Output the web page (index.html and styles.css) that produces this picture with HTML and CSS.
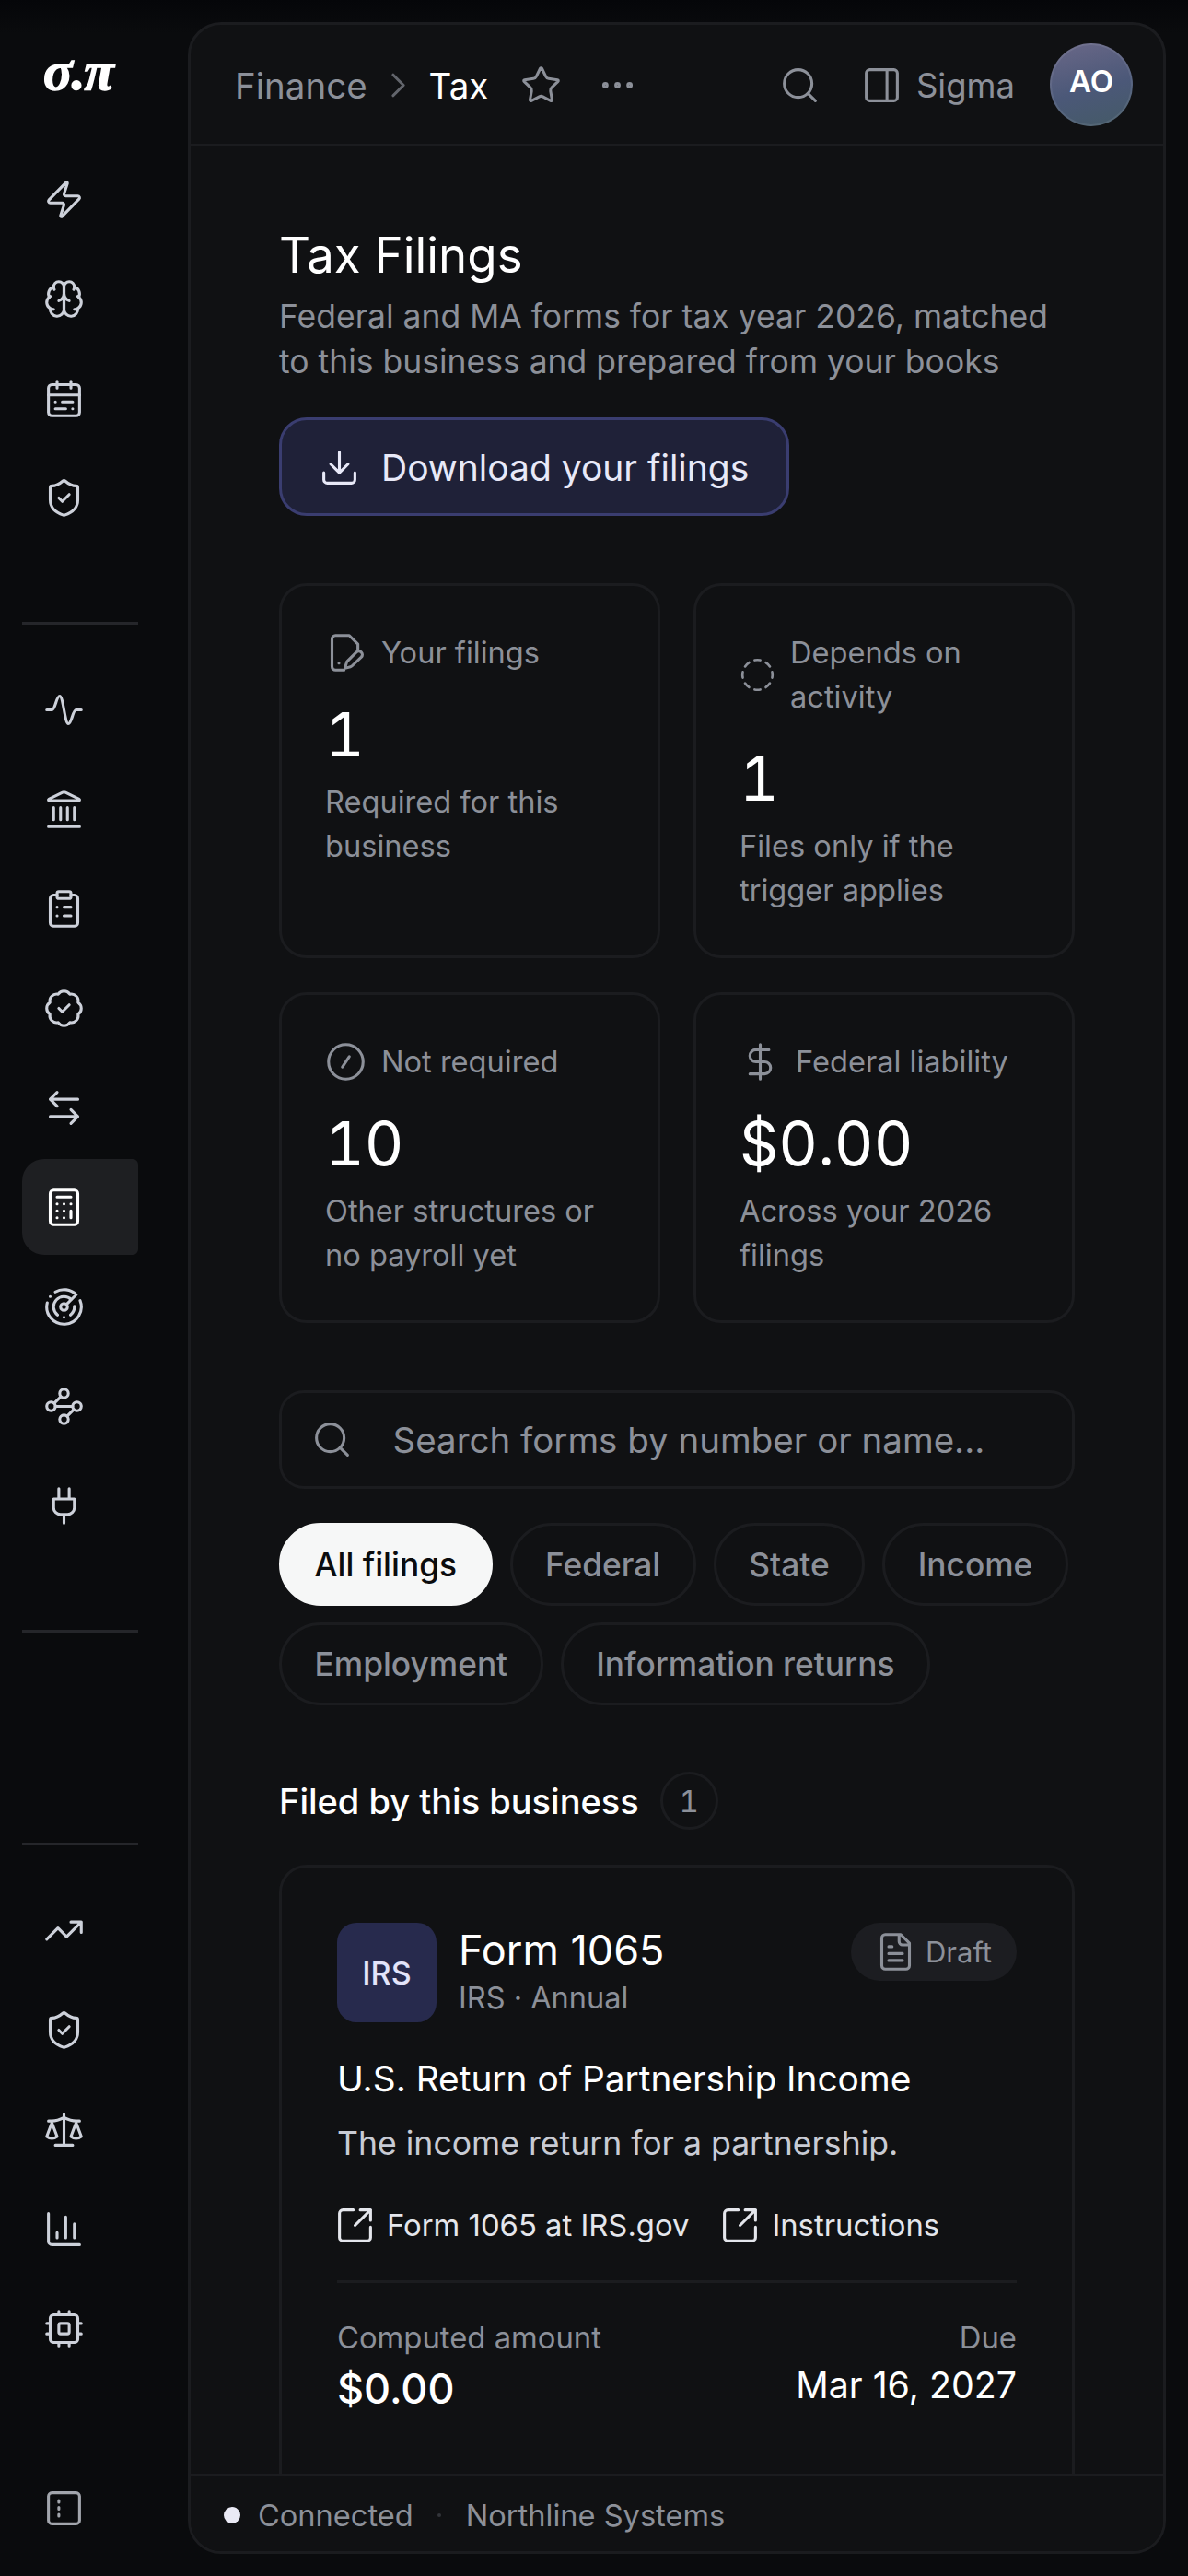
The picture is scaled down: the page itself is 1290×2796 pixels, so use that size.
FILE: index.html
```html
<!DOCTYPE html>
<html lang="en">
<head>
    <meta charset="UTF-8">
    <meta name="viewport" content="width=device-width, initial-scale=1.0">
    <title>Tax Filings</title>
    <link rel="stylesheet" href="styles.css">
</head>
<body>
    <aside class="sidebar">
        <div class="logo">σ.π</div>
        <nav class="nav-group">
            <a class="nav-item"><svg class="icon" viewBox="0 0 24 24"><path d="M4 14a1 1 0 0 1-.78-1.63l9.9-10.2a.5.5 0 0 1 .86.46l-1.92 6.02A1 1 0 0 0 13 10h7a1 1 0 0 1 .78 1.63l-9.9 10.2a.5.5 0 0 1-.86-.46l1.92-6.02A1 1 0 0 0 11 14z"/></svg></a>
            <a class="nav-item"><svg class="icon" viewBox="0 0 24 24"><path d="M12 5a3 3 0 1 0-5.997.125 4 4 0 0 0-2.526 5.77 4 4 0 0 0 .556 6.588A4 4 0 1 0 12 18Z"/><path d="M12 5a3 3 0 1 1 5.997.125 4 4 0 0 1 2.526 5.77 4 4 0 0 1-.556 6.588A4 4 0 1 1 12 18Z"/><path d="M12 5v13M15 13a4.5 4.5 0 0 1-3-4 4.5 4.5 0 0 1-3 4M17.599 6.5a3 3 0 0 0 .399-1.375M6.003 5.125A3 3 0 0 0 6.401 6.5M3.477 10.896a4 4 0 0 1 .585-.396M19.938 10.5a4 4 0 0 1 .585.396M6 18a4 4 0 0 1-1.967-.516M19.967 17.484A4 4 0 0 1 18 18"/></svg></a>
            <a class="nav-item"><svg class="icon" viewBox="0 0 24 24"><rect x="3" y="4" width="18" height="18" rx="2"/><path d="M16 2v4M3 10h18M8 2v4M17 14h-6M13 18H7M7 14h.01M17 18h.01"/></svg></a>
            <a class="nav-item"><svg class="icon" viewBox="0 0 24 24"><path d="M20 13c0 5-3.5 7.5-7.66 8.95a1 1 0 0 1-.67-.01C7.5 20.5 4 18 4 13V6a1 1 0 0 1 1-1c2 0 4.5-1.2 6.24-2.72a1.17 1.17 0 0 1 1.52 0C14.51 3.81 17 5 19 5a1 1 0 0 1 1 1z"/><path d="m9 12 2 2 4-4"/></svg></a>
        </nav>
        <div class="nav-divider"></div>
        <nav class="nav-group">
            <a class="nav-item"><svg class="icon" viewBox="0 0 24 24"><path d="M2 12h3c2 0 2.5-8 4.5-8s3 16 5 16 2.5-8 4.5-8H22"/></svg></a>
            <a class="nav-item"><svg class="icon" viewBox="0 0 24 24"><path d="M10 18v-7M14 18v-7M18 18v-7M6 18v-7M3 22h18"/><path d="M11.12 2.198a2 2 0 0 1 1.76.006l7.866 3.847c.476.233.31.949-.22.949H3.474c-.53 0-.695-.716-.22-.949z"/></svg></a>
            <a class="nav-item"><svg class="icon" viewBox="0 0 24 24"><rect x="8" y="2" width="8" height="4" rx="1"/><path d="M16 4h2a2 2 0 0 1 2 2v14a2 2 0 0 1-2 2H6a2 2 0 0 1-2-2V6a2 2 0 0 1 2-2h2M12 11h4M12 16h4M8 11h.01M8 16h.01"/></svg></a>
            <a class="nav-item"><svg class="icon" viewBox="0 0 24 24"><path d="M3.85 8.62a4 4 0 0 1 4.78-4.77 4 4 0 0 1 6.74 0 4 4 0 0 1 4.78 4.78 4 4 0 0 1 0 6.74 4 4 0 0 1-4.77 4.78 4 4 0 0 1-6.75 0 4 4 0 0 1-4.78-4.77 4 4 0 0 1 0-6.76Z"/><path d="m9 12 2 2 4-4"/></svg></a>
            <a class="nav-item"><svg class="icon" viewBox="0 0 24 24"><path d="M8 3 4 7l4 4M4 7h16M16 21l4-4-4-4M20 17H4"/></svg></a>
            <a class="nav-item active"><svg class="icon" viewBox="0 0 24 24"><rect x="4" y="2" width="16" height="20" rx="2"/><path d="M8 6h8M16 14v4M16 10h.01M12 10h.01M8 10h.01M12 14h.01M8 14h.01M12 18h.01M8 18h.01"/></svg></a>
            <a class="nav-item"><svg class="icon" viewBox="0 0 24 24"><path d="M19.07 4.93A10 10 0 0 0 6.99 3.34M4 6h.01M2.29 9.62A10 10 0 1 0 21.31 8.35M16.24 7.76A6 6 0 1 0 8.23 16.67M12 18h.01M17.99 11.66A6 6 0 0 1 15.77 16.67M13.41 10.59l5.66-5.66"/><circle cx="12" cy="12" r="2"/></svg></a>
            <a class="nav-item"><svg class="icon" viewBox="0 0 24 24"><circle cx="12" cy="4.5" r="2.5"/><circle cx="4.5" cy="12" r="2.5"/><circle cx="19.5" cy="12" r="2.5"/><circle cx="12" cy="19.5" r="2.5"/><path d="m10.2 6.3-3.9 3.9M7 12h10M13.8 17.7l3.9-3.9"/></svg></a>
            <a class="nav-item"><svg class="icon" viewBox="0 0 24 24"><path d="M12 22v-5M9 8V2M15 8V2M18 8v5a4 4 0 0 1-4 4h-4a4 4 0 0 1-4-4V8Z"/></svg></a>
        </nav>
        <div class="nav-divider"></div>
        <div class="nav-divider nav-divider-far"></div>
        <nav class="nav-group">
            <a class="nav-item"><svg class="icon" viewBox="0 0 24 24"><path d="M22 7l-8.5 8.5-5-5L2 17M16 7h6v6"/></svg></a>
            <a class="nav-item"><svg class="icon" viewBox="0 0 24 24"><path d="M20 13c0 5-3.5 7.5-7.66 8.95a1 1 0 0 1-.67-.01C7.5 20.5 4 18 4 13V6a1 1 0 0 1 1-1c2 0 4.5-1.2 6.24-2.72a1.17 1.17 0 0 1 1.52 0C14.51 3.81 17 5 19 5a1 1 0 0 1 1 1z"/><path d="m9 12 2 2 4-4"/></svg></a>
            <a class="nav-item"><svg class="icon" viewBox="0 0 24 24"><path d="m16 16 3-8 3 8c-.87.65-1.92 1-3 1s-2.13-.35-3-1ZM2 16l3-8 3 8c-.87.65-1.92 1-3 1s-2.13-.35-3-1ZM7 21h10M12 3v18M3 7h2c2 0 5-1 7-2 2 1 5 2 7 2h2"/></svg></a>
            <a class="nav-item"><svg class="icon" viewBox="0 0 24 24"><path d="M3 3v16a2 2 0 0 0 2 2h16M18 17V9M13 17V5M8 17v-3"/></svg></a>
            <a class="nav-item"><svg class="icon" viewBox="0 0 24 24"><rect x="4" y="4" width="16" height="16" rx="2"/><rect x="9" y="9" width="6" height="6" rx="1"/><path d="M15 2v2M15 20v2M2 15h2M2 9h2M20 15h2M20 9h2M9 2v2M9 20v2"/></svg></a>
        </nav>
        <a class="nav-item nav-toggle"><svg class="icon" viewBox="0 0 24 24"><rect x="3" y="3" width="18" height="18" rx="2"/><path d="M9 7.5v1M9 11.5v1M9 15.5v1"/></svg></a>
    </aside>

    <main class="shell">
        <header class="topbar">
            <span class="crumb">Finance</span>
            <svg class="top-icon chevron" viewBox="0 0 24 24"><path d="m9 18 6-6-6-6"/></svg>
            <span class="crumb-current">Tax</span>
            <svg class="top-icon star" viewBox="0 0 24 24"><path d="M11.525 2.295a.53.53 0 0 1 .95 0l2.31 4.679a2.12 2.12 0 0 0 1.595 1.16l5.166.756a.53.53 0 0 1 .294.904l-3.736 3.638a2.12 2.12 0 0 0-.611 1.878l.882 5.14a.53.53 0 0 1-.771.56l-4.618-2.428a2.12 2.12 0 0 0-1.973 0L6.396 21.01a.53.53 0 0 1-.77-.56l.881-5.139a2.12 2.12 0 0 0-.611-1.879L2.16 9.795a.53.53 0 0 1 .294-.906l5.165-.755a2.12 2.12 0 0 0 1.597-1.16z"/></svg>
            <svg class="top-icon dots" viewBox="0 0 24 24"><circle cx="5" cy="12" r="1"/><circle cx="12" cy="12" r="1"/><circle cx="19" cy="12" r="1"/></svg>
            <svg class="top-icon search" viewBox="0 0 24 24"><circle cx="11" cy="11" r="8"/><path d="m21 21-4.3-4.3"/></svg>
            <svg class="top-icon panel" viewBox="0 0 24 24"><rect x="3" y="3" width="18" height="18" rx="2"/><path d="M15 3v18"/></svg>
            <span class="mode">Sigma</span>
            <div class="avatar">AO</div>
        </header>

        <div class="content">
            <h1>Tax Filings</h1>
            <p class="subtitle">Federal and MA forms for tax year 2026, matched to this business and prepared from your books</p>
            <button class="download-btn">
                <svg viewBox="0 0 24 24"><path d="M12 15V3M21 15v4a2 2 0 0 1-2 2H5a2 2 0 0 1-2-2v-4M7 10l5 5 5-5"/></svg>
                Download your filings
            </button>

            <section class="stats">
                <div class="stat-card">
                    <div class="stat-label">
                        <svg class="stat-icon" viewBox="0 0 24 24"><path d="M11 22H6a2 2 0 0 1-2-2V4a2 2 0 0 1 2-2h8l5 5v3"/><path d="M21 14.5a2 2 0 0 0-2.9-2.8l-5.2 5.2a2 2 0 0 0-.5.9l-.9 3.2 3.2-.9a2 2 0 0 0 .9-.5zM8 18h.01"/></svg>
                        <span>Your filings</span>
                    </div>
                    <div class="stat-value">1</div>
                    <div class="stat-note">Required for this business</div>
                </div>
                <div class="stat-card">
                    <div class="stat-label">
                        <svg class="stat-icon stat-icon-small" viewBox="0 0 24 24"><path d="M10.1 2.182a10 10 0 0 1 3.8 0M13.9 21.818a10 10 0 0 1-3.8 0M17.609 3.721a10 10 0 0 1 2.69 2.7M2.182 13.9a10 10 0 0 1 0-3.8M20.279 17.609a10 10 0 0 1-2.7 2.69M21.818 10.1a10 10 0 0 1 0 3.8M3.721 6.391a10 10 0 0 1 2.7-2.69M6.391 20.279a10 10 0 0 1-2.69-2.7"/></svg>
                        <span>Depends on activity</span>
                    </div>
                    <div class="stat-value">1</div>
                    <div class="stat-note">Files only if the trigger applies</div>
                </div>
                <div class="stat-card">
                    <div class="stat-label">
                        <svg class="stat-icon" viewBox="0 0 24 24"><circle cx="12" cy="12" r="10"/><path d="m14 9-4 6"/></svg>
                        <span>Not required</span>
                    </div>
                    <div class="stat-value">10</div>
                    <div class="stat-note">Other structures or no payroll yet</div>
                </div>
                <div class="stat-card">
                    <div class="stat-label">
                        <svg class="stat-icon" viewBox="0 0 24 24"><path d="M12 2v20M17 5H9.5a3.5 3.5 0 0 0 0 7h5a3.5 3.5 0 0 1 0 7H6"/></svg>
                        <span>Federal liability</span>
                    </div>
                    <div class="stat-value">$0.00</div>
                    <div class="stat-note">Across your 2026 filings</div>
                </div>
            </section>

            <div class="search-box">
                <svg viewBox="0 0 24 24"><circle cx="11" cy="11" r="8"/><path d="m21 21-4.3-4.3"/></svg>
                <span>Search forms by number or name...</span>
            </div>

            <div class="chips">
                <span class="chip chip-active">All filings</span>
                <span class="chip">Federal</span>
                <span class="chip">State</span>
                <span class="chip">Income</span>
                <span class="chip">Employment</span>
                <span class="chip">Information returns</span>
            </div>

            <div class="section-head">
                <h2>Filed by this business</h2>
                <span class="count">1</span>
            </div>

            <article class="form-card">
                <div class="form-top">
                    <div class="form-tile">IRS</div>
                    <div class="form-name">
                        <h3>Form 1065</h3>
                        <p>IRS · Annual</p>
                    </div>
                    <span class="status-pill">
                        <svg viewBox="0 0 24 24"><path d="M15 2H6a2 2 0 0 0-2 2v16a2 2 0 0 0 2 2h12a2 2 0 0 0 2-2V7ZM14 2v4a2 2 0 0 0 2 2h4M10 9H8M16 13H8M16 17H8"/></svg>
                        Draft
                    </span>
                </div>
                <h4>U.S. Return of Partnership Income</h4>
                <p class="form-desc">The income return for a partnership.</p>
                <div class="form-links">
                    <a><svg viewBox="0 0 24 24"><path d="M21 13v6a2 2 0 0 1-2 2H5a2 2 0 0 1-2-2V5a2 2 0 0 1 2-2h6M21 3l-9 9M15 3h6v6"/></svg>Form 1065 at IRS.gov</a>
                    <a><svg viewBox="0 0 24 24"><path d="M21 13v6a2 2 0 0 1-2 2H5a2 2 0 0 1-2-2V5a2 2 0 0 1 2-2h6M21 3l-9 9M15 3h6v6"/></svg>Instructions</a>
                </div>
                <div class="form-meta">
                    <div>
                        <div class="meta-label">Computed amount</div>
                        <div class="meta-amount">$0.00</div>
                    </div>
                    <div class="meta-right">
                        <div class="meta-label">Due</div>
                        <div class="meta-date">Mar 16, 2027</div>
                    </div>
                </div>
            </article>
        </div>

        <footer class="statusbar">
            <span class="status-dot"></span>
            <span>Connected</span>
            <span class="status-sep"></span>
            <span>Northline Systems</span>
        </footer>
    </main>
</body>
</html>
```

FILE: styles.css
```css
* {
    margin: 0;
    padding: 0;
    box-sizing: border-box;
}

html, body {
    width: 1290px;
    height: 2796px;
    overflow: hidden;
}

body {
    display: flex;
    align-items: flex-start;
    background: linear-gradient(180deg, #050609 0, #0a0b0d 36px);
    font-family: Inter, "Noto Sans", sans-serif;
    color: #fff;
}

svg {
    width: 45px;
    height: 45px;
    flex: none;
    fill: none;
    stroke: currentColor;
    stroke-width: 1.65;
    stroke-linecap: round;
    stroke-linejoin: round;
}

/* sidebar */
.sidebar {
    width: 204px;
    height: 2796px;
    flex: none;
    display: flex;
    flex-direction: column;
    padding: 0 54px 22px 24px;
    color: #cdd1da;
}

.logo {
    height: 164px;
    padding: 53px 0 0 23px;
    font-family: "Liberation Serif", serif;
    font-weight: 700;
    font-style: italic;
    font-size: 59px;
    line-height: 48px;
    color: #fff;
    white-space: nowrap;
    letter-spacing: -1px;
    -webkit-text-stroke: 1.5px #fff;
}

.nav-group {
    display: flex;
    flex-direction: column;
    gap: 4px;
}

.nav-item {
    display: flex;
    align-items: center;
    height: 104px;
    padding-left: 22.5px;
    border-radius: 24px 6px 6px 24px;
}

.nav-item.active {
    background: #1e1f22;
    color: #fff;
}

.nav-divider {
    height: 3px;
    background: #25262a;
    margin: 83px 0 40px;
    flex: none;
}

.nav-divider-far {
    margin-top: 188px;
}

.nav-toggle {
    margin-top: auto;
    color: #a2a5ac;
}

/* main panel */
.shell {
    width: 1062px;
    height: 2748px;
    margin-top: 24px;
    display: flex;
    flex-direction: column;
    background: #101113;
    border: 3px solid #1b1c1f;
    border-radius: 36px;
    overflow: hidden;
}

.topbar {
    height: 132px;
    flex: none;
    display: flex;
    align-items: center;
    padding: 2px 33px 0 48px;
    border-bottom: 3px solid #1b1c1f;
    font-size: 38.5px;
    color: #8c9099;
}

.chevron {
    margin: 0 11px;
    color: #62656c;
}

.crumb-current {
    color: #fff;
}

.star {
    margin-left: 35px;
}

.dots {
    margin-left: 38px;
}

.search {
    margin-left: auto;
}

.panel {
    margin-left: 44px;
}

.mode {
    margin-left: 15px;
    font-size: 36.5px;
}

.avatar {
    width: 90px;
    height: 90px;
    margin: -2px 0 0 38px;
    padding-bottom: 8px;
    display: flex;
    align-items: center;
    justify-content: center;
    border-radius: 50%;
    background: linear-gradient(165deg, #6a6888, #4b5878 55%, #445a66);
    box-shadow: inset 0 0 0 2px rgba(255, 255, 255, 0.08);
    color: #fff;
    font-size: 33px;
    font-weight: 600;
}

.content {
    flex: 1;
    min-height: 0;
    overflow: hidden;
    padding: 88px 96px 0;
}

h1 {
    font-size: 52.8px;
    font-weight: 400;
    line-height: 60px;
    margin-bottom: 12px;
}

.subtitle {
    font-size: 35.5px;
    line-height: 49px;
    color: #8c9099;
}

.download-btn {
    width: 554px;
    height: 107px;
    margin-top: 36px;
    padding: 2px 0 0 39.5px;
    display: flex;
    align-items: center;
    gap: 23.5px;
    background: #1f2138;
    border: 3px solid #3a3d70;
    border-radius: 30px;
    color: #e8e9f8;
    font-family: inherit;
    font-size: 39px;
    font-weight: 400;
}

/* stat cards */
.stats {
    margin-top: 73px;
    display: grid;
    grid-template-columns: 1fr 1fr;
    gap: 37px 36px;
}

.stat-card {
    padding: 48px 47px 47px;
    border: 3px solid #1b1c1f;
    border-radius: 30px;
}

.stat-label {
    display: flex;
    align-items: center;
    gap: 16px;
    font-size: 32.6px;
    line-height: 48px;
    color: #8c9099;
}

.stat-icon-small {
    width: 39px;
    height: 39px;
}

.stat-value {
    margin: 22px 0 5px;
    font-size: 66px;
    line-height: 87px;
    font-variant-numeric: tabular-nums;
}

.stat-note {
    font-size: 32.6px;
    line-height: 48px;
    color: #8c9099;
}

/* search and filters */
.search-box {
    height: 107px;
    margin-top: 73px;
    padding-left: 31.5px;
    display: flex;
    align-items: center;
    gap: 44px;
    border: 3px solid #1b1c1f;
    border-radius: 27px;
    font-size: 38.5px;
    color: #8c9099;
}

.chips {
    margin-top: 37px;
    display: flex;
    flex-wrap: wrap;
    gap: 18px 19px;
}

.chip {
    height: 90px;
    padding: 0 35.5px;
    display: flex;
    align-items: center;
    border: 3px solid #1b1c1f;
    border-radius: 45px;
    font-size: 35.3px;
    font-weight: 500;
    color: #8c9099;
}

.chip-active {
    background: #f6f7f7;
    border-color: #f6f7f7;
    color: #0b0c0e;
}

.section-head {
    margin-top: 72px;
    display: flex;
    align-items: center;
    gap: 23px;
}

h2 {
    font-size: 38px;
    font-weight: 500;
}

.count {
    width: 63px;
    height: 63px;
    display: flex;
    align-items: center;
    justify-content: center;
    border: 3px solid #1b1c1f;
    border-radius: 50%;
    font-size: 33px;
    font-variant-numeric: tabular-nums;
    color: #8c9099;
}

/* form card */
.form-card {
    margin-top: 38px;
    padding: 60px 60px 200px;
    border: 3px solid #1b1c1f;
    border-radius: 30px;
}

.form-top {
    display: flex;
    align-items: flex-start;
    gap: 24px;
}

.form-tile {
    width: 108px;
    height: 108px;
    display: flex;
    align-items: center;
    justify-content: center;
    background: #272a4d;
    border-radius: 21px;
    color: #e3e4fa;
    font-size: 34px;
    font-weight: 500;
}

.form-name {
    flex: 1;
}

h3 {
    font-size: 45px;
    font-weight: 400;
    line-height: 59px;
}

.form-name p {
    font-size: 32.5px;
    line-height: 46px;
    color: #8c9099;
}

.status-pill {
    height: 63px;
    padding: 0 27px 0 26px;
    display: flex;
    align-items: center;
    gap: 10px;
    background: #1c1d21;
    border-radius: 32px;
    font-size: 31px;
    color: #8c9099;
}

h4 {
    margin-top: 37px;
    font-size: 38.8px;
    font-weight: 400;
    line-height: 48px;
}

.form-desc {
    margin-top: 23px;
    font-size: 35.6px;
    line-height: 48px;
    color: #c8cbd4;
}

.form-links {
    margin: 40px 0 0 -3px;
    display: flex;
    gap: 33px;
    font-size: 32.8px;
    line-height: 48px;
    color: #e4e6ec;
}

.form-links a {
    display: flex;
    align-items: center;
    gap: 12px;
}

.form-meta {
    margin-top: 36px;
    padding-top: 35px;
    border-top: 3px solid #1b1c1f;
    display: flex;
    justify-content: space-between;
}

.meta-right {
    text-align: right;
}

.meta-label {
    font-size: 32.8px;
    line-height: 48px;
    color: #8c9099;
}

.meta-amount {
    font-size: 45px;
    font-weight: 500;
    line-height: 64px;
}

.meta-date {
    font-size: 39.3px;
    font-weight: 400;
    line-height: 56px;
}

/* bottom status bar */
.statusbar {
    height: 84px;
    flex: none;
    display: flex;
    align-items: center;
    padding: 3px 0 0 36px;
    border-top: 3px solid #1b1c1f;
    background: #101113;
    font-size: 32.6px;
    color: #8c9099;
}

.status-dot {
    width: 18px;
    height: 18px;
    margin-right: 19px;
    border-radius: 50%;
    background: #eaeaf5;
}

.status-sep {
    width: 4px;
    height: 4px;
    margin: 0 26.5px;
    border-radius: 50%;
    background: #33353a;
}
```
